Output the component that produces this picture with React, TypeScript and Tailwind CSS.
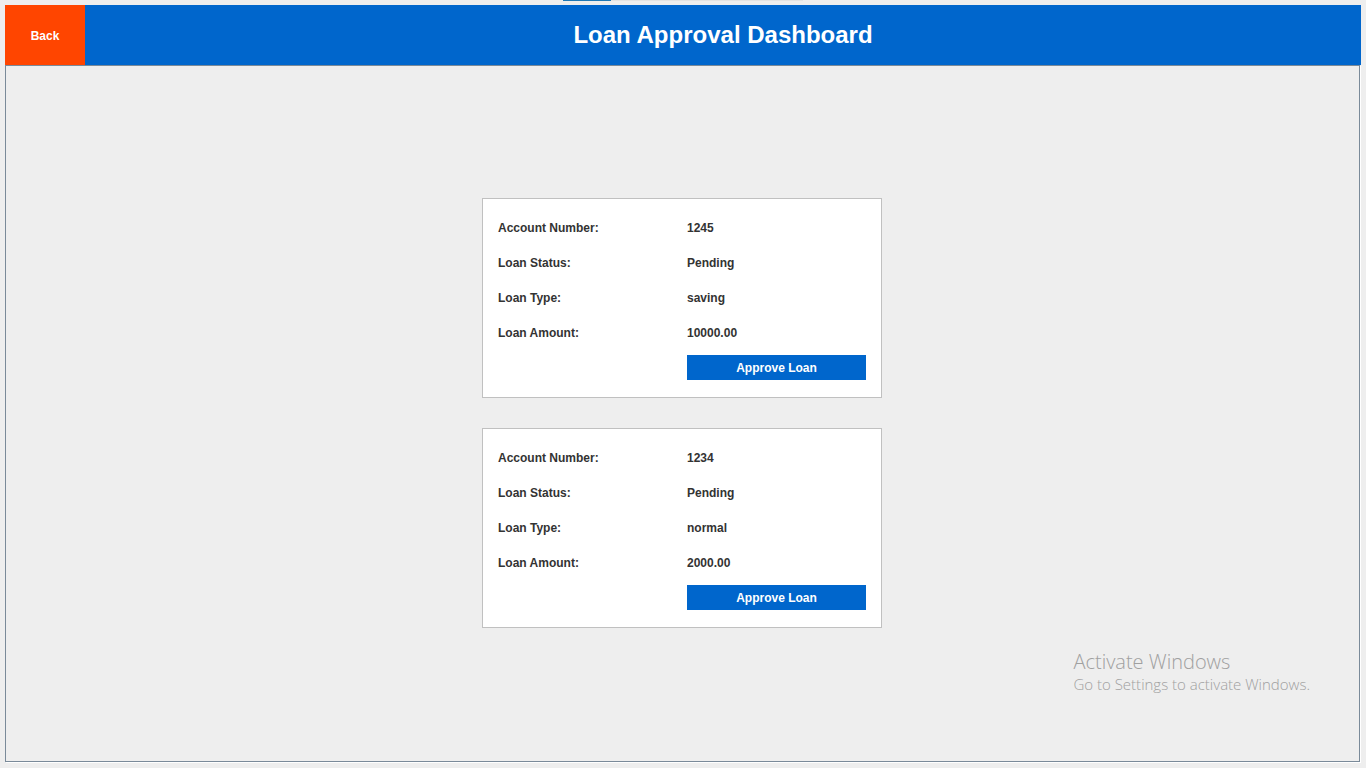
type Loan = {
  account: string;
  status: string;
  type: string;
  amount: string;
};

const loans: Loan[] = [
  { account: "1245", status: "Pending", type: "saving", amount: "10000.00" },
  { account: "1234", status: "Pending", type: "normal", amount: "2000.00" },
];

function Field({ label, value }: { label: string; value: string }) {
  return (
    <div className="grid grid-cols-2 gap-[10px] pt-px leading-6">
      <dt>{label}</dt>
      <dd>{value}</dd>
    </div>
  );
}

function LoanCard({ loan }: { loan: Loan }) {
  return (
    <article className="flex w-full max-w-[400px] flex-col gap-[10px] border border-[#c0c0c0] bg-white px-[15px] pt-4 pb-[17px] text-xs font-bold text-[#333333]">
      <dl className="flex flex-col gap-[10px]">
        <Field label="Account Number:" value={loan.account} />
        <Field label="Loan Status:" value={loan.status} />
        <Field label="Loan Type:" value={loan.type} />
        <Field label="Loan Amount:" value={loan.amount} />
      </dl>
      <div className="grid grid-cols-2 gap-[10px]">
        <button
          type="button"
          className="col-start-2 bg-[#0066cc] pt-px leading-6 text-white"
        >
          Approve Loan
        </button>
      </div>
    </article>
  );
}

export default function App() {
  return (
    <div className="relative flex min-h-screen flex-col bg-[#eeeeee] p-[5px] font-['Liberation_Sans',Arial,sans-serif]">
      <div className="absolute inset-x-0 top-0 flex h-px justify-center">
        <div className="w-12 bg-[#1f78b4]" />
        <div className="w-48 bg-[#e2e2e2]" />
      </div>
      <header className="flex h-[60px] bg-[#0066cc] text-white">
        <button type="button" className="w-20 bg-[#ff4500] pt-px text-xs font-bold">
          Back
        </button>
        <h1 className="flex flex-1 items-center justify-center text-2xl font-bold">
          Loan Approval Dashboard
        </h1>
      </header>
      <main className="mr-px mb-px flex flex-1 flex-col items-center justify-center gap-[30px] border border-[#7a8a99] pr-px pb-px shadow-[1px_1px_0_#ffffff]">
        {loans.map((loan) => (
          <LoanCard key={loan.account} loan={loan} />
        ))}
      </main>
      <aside className="absolute right-14 bottom-[74px] font-['Open_Sans','Noto_Sans',sans-serif] font-light text-[#a0a0a0]">
        <p className="text-xl leading-6">Activate Windows</p>
        <p className="text-[15px] leading-5">Go to Settings to activate Windows.</p>
      </aside>
    </div>
  );
}
